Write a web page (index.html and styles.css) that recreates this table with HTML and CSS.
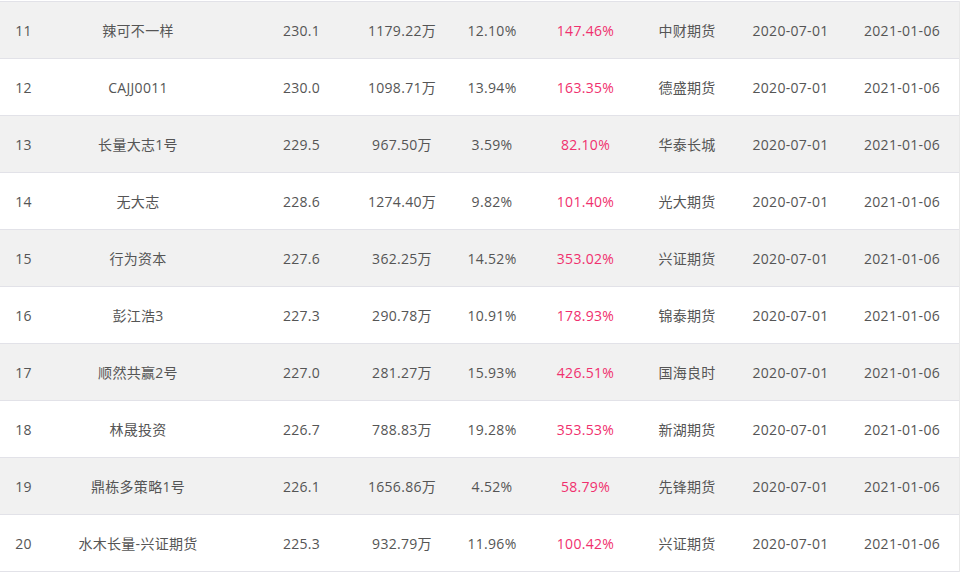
FILE: index.html
```html
<!DOCTYPE html>
<html lang="zh-CN">
<head>
<meta charset="utf-8">
<title>排行</title>
<link rel="stylesheet" href="styles.css">
</head>
<body>
<div class="table">
  <div class="row odd"><span class="c">11</span><span class="c">辣可不一样</span><span class="c">230.1</span><span class="c">1179.22万</span><span class="c">12.10%</span><span class="c up">147.46%</span><span class="c">中财期货</span><span class="c">2020-07-01</span><span class="c">2021-01-06</span></div>
  <div class="row"><span class="c">12</span><span class="c">CAJJ0011</span><span class="c">230.0</span><span class="c">1098.71万</span><span class="c">13.94%</span><span class="c up">163.35%</span><span class="c">德盛期货</span><span class="c">2020-07-01</span><span class="c">2021-01-06</span></div>
  <div class="row odd"><span class="c">13</span><span class="c">长量大志1号</span><span class="c">229.5</span><span class="c">967.50万</span><span class="c">3.59%</span><span class="c up">82.10%</span><span class="c">华泰长城</span><span class="c">2020-07-01</span><span class="c">2021-01-06</span></div>
  <div class="row"><span class="c">14</span><span class="c">无大志</span><span class="c">228.6</span><span class="c">1274.40万</span><span class="c">9.82%</span><span class="c up">101.40%</span><span class="c">光大期货</span><span class="c">2020-07-01</span><span class="c">2021-01-06</span></div>
  <div class="row odd"><span class="c">15</span><span class="c">行为资本</span><span class="c">227.6</span><span class="c">362.25万</span><span class="c">14.52%</span><span class="c up">353.02%</span><span class="c">兴证期货</span><span class="c">2020-07-01</span><span class="c">2021-01-06</span></div>
  <div class="row"><span class="c">16</span><span class="c">彭江浩3</span><span class="c">227.3</span><span class="c">290.78万</span><span class="c">10.91%</span><span class="c up">178.93%</span><span class="c">锦泰期货</span><span class="c">2020-07-01</span><span class="c">2021-01-06</span></div>
  <div class="row odd"><span class="c">17</span><span class="c">顺然共赢2号</span><span class="c">227.0</span><span class="c">281.27万</span><span class="c">15.93%</span><span class="c up">426.51%</span><span class="c">国海良时</span><span class="c">2020-07-01</span><span class="c">2021-01-06</span></div>
  <div class="row"><span class="c">18</span><span class="c">林晟投资</span><span class="c">226.7</span><span class="c">788.83万</span><span class="c">19.28%</span><span class="c up">353.53%</span><span class="c">新湖期货</span><span class="c">2020-07-01</span><span class="c">2021-01-06</span></div>
  <div class="row odd"><span class="c">19</span><span class="c">鼎栋多策略1号</span><span class="c">226.1</span><span class="c">1656.86万</span><span class="c">4.52%</span><span class="c up">58.79%</span><span class="c">先锋期货</span><span class="c">2020-07-01</span><span class="c">2021-01-06</span></div>
  <div class="row last"><span class="c">20</span><span class="c">水木长量-兴证期货</span><span class="c">225.3</span><span class="c">932.79万</span><span class="c">11.96%</span><span class="c up">100.42%</span><span class="c">兴证期货</span><span class="c">2020-07-01</span><span class="c">2021-01-06</span></div>
</div>
</body>
</html>
```
FILE: styles.css
```css
html, body {
  margin: 0;
  padding: 0;
  background: #ffffff;
}
body {
  padding-top: 1px;
  font-family: "Open Sans", "Noto Sans CJK SC", sans-serif;
  font-size: 14px;
  color: #555555;
}
.table {
  width: 959px;
  border-right: 1px solid #e8e8e8;
  overflow: hidden;
}
.row {
  display: grid;
  grid-template-columns: 47px 182px 145px 56px 124px 63px 140px 67px 156px;
  height: 56px;
  border-top: 1px solid #e2e2e8;
  background: #ffffff;
}
.row.odd {
  background: #f1f1f1;
}
.row.last {
  border-bottom: 1px solid #e2e2e8;
}
.c {
  display: flex;
  align-items: center;
  justify-content: center;
  white-space: nowrap;
  letter-spacing: 0.3px;
}
.up {
  color: #f0306e;
}
```
